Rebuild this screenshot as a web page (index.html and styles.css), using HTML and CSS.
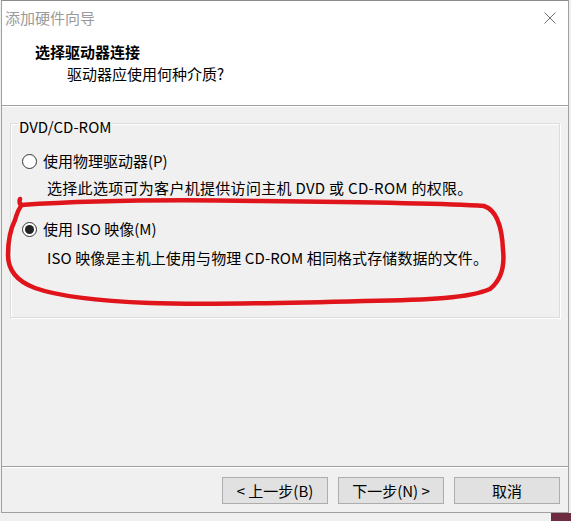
FILE: index.html
```html
<!DOCTYPE html>
<html lang="zh-CN">
<head>
    <meta charset="UTF-8">
    <title>添加硬件向导</title>
    <link rel="stylesheet" href="styles.css">
</head>
<body>
    <div class="window">
        <div class="titlebar">
            <span class="title">添加硬件向导</span>
            <button class="close-button">
                <svg width="12" height="12" viewBox="0 0 12 12" fill="none" stroke="#707070" stroke-width="1">
                    <path d="M0.5 0.5L11.5 11.5M11.5 0.5L0.5 11.5"/>
                </svg>
            </button>
        </div>

        <div class="header">
            <h1>选择驱动器连接</h1>
            <p>驱动器应使用何种介质?</p>
        </div>

        <div class="content">
            <fieldset class="group">
                <legend>DVD/CD-ROM</legend>
                <label class="option first">
                    <span class="radio"></span>
                    使用物理驱动器(P)
                </label>
                <p class="desc">选择此选项可为客户机提供访问主机 DVD 或 CD-ROM 的权限。</p>
                <label class="option second">
                    <span class="radio checked"></span>
                    使用 ISO 映像(M)
                </label>
                <p class="desc last">ISO 映像是主机上使用与物理 CD-ROM 相同格式存储数据的文件。</p>
            </fieldset>
        </div>

        <div class="footer">
            <button class="wizard-button">&lt; 上一步(B)</button>
            <button class="wizard-button">下一步(N) &gt;</button>
            <button class="wizard-button">取消</button>
        </div>
    </div>

    <!-- hand drawn marker round the ISO option -->
    <svg class="annotation" width="571" height="521" viewBox="0 0 571 521" fill="none">
        <path d="M20 199 C19 202 20 205 21 205 C80 201 150 199 260 201 C360 202 440 203 484 206
                 C496 210 502 225 503 250 C505 268 500 281 490 289 C470 298 430 300 364 301
                 C290 303 200 305 150 303 C100 301 60 297 35 288 C16 281 8 270 8 255
                 C8 240 11 228 15 220 C17 213 19 208 22 205"
              stroke="#e0141b" stroke-width="4.5" stroke-linecap="round" stroke-linejoin="round"/>
    </svg>
</body>
</html>
```

FILE: styles.css
```css
* {
    margin: 0;
    padding: 0;
    box-sizing: border-box;
}

body {
    width: 571px;
    height: 521px;
    position: relative;
    overflow: hidden;
    background: linear-gradient(#6d2b40, #6d2b40) no-repeat right bottom / 20px 8px, #f0f0f0;
    font-family: "Noto Sans CJK SC", sans-serif;
    font-size: 15px;
    color: #000;
}

/* Dialog window */
.window {
    margin-left: 1px;
    width: 568px;
    height: 513px;
    background-color: #fff;
    border: 1px solid #a0a0a0;
    border-top-color: #8c8c8c;
    display: flex;
    flex-direction: column;
}

.titlebar {
    height: 33px;
    display: flex;
    align-items: center;
    justify-content: space-between;
    padding-left: 3px;
    padding-right: 12px;
}

.title {
    color: #9a9a9a;
    line-height: 20px;
}

.close-button {
    background: none;
    border: none;
    width: 12px;
    height: 12px;
    display: flex;
}

/* Wizard header */
.header {
    height: 72px;
    padding: 8px 0 0 33px;
    border-bottom: 1px solid #a0a0a0;
    box-shadow: 0 1px 0 #fff;
    position: relative;
}

.header h1 {
    font-size: 15px;
    font-weight: 700;
    line-height: 20px;
}

.header p {
    margin: 2px 0 0 32px;
    line-height: 20px;
}

/* Page body */
.content {
    height: 360px;
    background-color: #f0f0f0;
    padding: 3px 8px 0 8px;
}

.group {
    height: 209px;
    border: 1px solid #dcdcdc;
    box-shadow: inset 1px 1px 0 #fff, 1px 1px 0 #fff;
    padding: 0;
}

.group legend {
    margin-left: 7px;
    padding: 8px 1px 0 1px;
    line-height: 20px;
}

.option {
    display: flex;
    align-items: center;
    gap: 6px;
    padding-left: 11px;
    line-height: 20px;
}

.option.first {
    margin-top: 14px;
}

.option.second {
    margin-top: 21px;
}

.radio {
    width: 15px;
    height: 15px;
    border: 1px solid #333;
    border-radius: 50%;
    background-color: #fff;
    display: flex;
    align-items: center;
    justify-content: center;
}

.radio.checked::after {
    content: "";
    width: 9px;
    height: 9px;
    border-radius: 50%;
    background-color: #222;
}

.desc {
    margin: 7px 0 0 36px;
    line-height: 20px;
    letter-spacing: 0.3px;
}

.desc.last {
    margin-top: 9px;
    letter-spacing: 0.1px;
}

/* Buttons row */
.footer {
    flex: 1;
    background-color: #f0f0f0;
    border-top: 1px solid #a0a0a0;
    box-shadow: inset 0 1px 0 #fff;
    display: flex;
    justify-content: flex-end;
    align-items: flex-start;
    gap: 10px;
    padding: 10px 8px 0 0;
}

.wizard-button {
    width: 106px;
    height: 27px;
    background-color: #e1e1e1;
    border: 1px solid #adadad;
    font-family: inherit;
    font-size: 15px;
    color: #000;
    line-height: 20px;
    white-space: pre;
}

.annotation {
    position: absolute;
    left: 0;
    top: 0;
    pointer-events: none;
}
```
